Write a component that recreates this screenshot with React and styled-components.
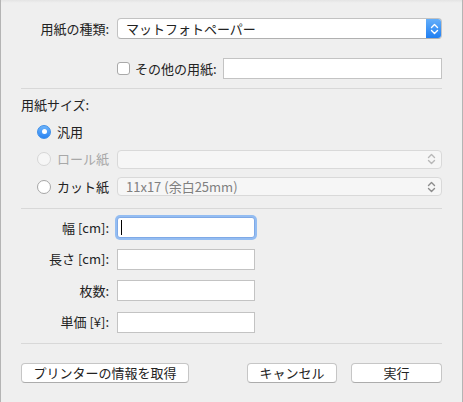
import React from 'react'
import styled, { createGlobalStyle } from 'styled-components'

const GlobalStyle = createGlobalStyle`
  html, body {
    margin: 0;
    padding: 0;
    background: #efefef;
  }
  * { box-sizing: border-box; }
`

const Chevrons = ({ color }) => (
  <svg width="9" height="12" viewBox="0 0 9 12">
    <path d="M1.5 4.5 L4.5 1.5 L7.5 4.5" fill="none" stroke={color} strokeWidth="1.4" strokeLinecap="round" strokeLinejoin="round" />
    <path d="M1.5 7.5 L4.5 10.5 L7.5 7.5" fill="none" stroke={color} strokeWidth="1.4" strokeLinecap="round" strokeLinejoin="round" />
  </svg>
)

export default function App() {
  return (
    <>
      <GlobalStyle />
      <Dialog>
        <TopRow>
          <SideLabel>用紙の種類:</SideLabel>
          <Popup>
            <PopupText>マットフォトペーパー</PopupText>
            <BlueArrow><Chevrons color="#ffffff" /></BlueArrow>
          </Popup>
        </TopRow>

        <OtherRow>
          <CheckBox />
          <Text>その他の用紙:</Text>
          <Field $grow />
        </OtherRow>

        <Separator $top={9} />

        <Heading>用紙サイズ:</Heading>

        <RadioGroup>
          <RadioRow>
            <Radio $checked />
            <Text>汎用</Text>
          </RadioRow>
          <RadioRow>
            <Radio $disabled />
            <RadioLabel $disabled>ロール紙</RadioLabel>
            <GrayPopup>
              <PopupText />
              <Chevrons color="#b8b8b8" />
            </GrayPopup>
          </RadioRow>
          <RadioRow>
            <Radio />
            <RadioLabel>カット紙</RadioLabel>
            <GrayPopup>
              <PopupText $gray>11x17 (余白25mm)</PopupText>
              <Chevrons color="#8c8c8c" />
            </GrayPopup>
          </RadioRow>
        </RadioGroup>

        <Separator $top={11.5} />

        <Fields>
          <FieldRow>
            <SideLabel>幅 [cm]:</SideLabel>
            <Field $focused><Caret /></Field>
          </FieldRow>
          <FieldRow>
            <SideLabel>長さ [cm]:</SideLabel>
            <Field />
          </FieldRow>
          <FieldRow>
            <SideLabel>枚数:</SideLabel>
            <Field />
          </FieldRow>
          <FieldRow>
            <SideLabel>単価 [¥]:</SideLabel>
            <Field />
          </FieldRow>
        </Fields>

        <Separator $top={10} />

        <ButtonBar>
          <Button $w={168}>プリンターの情報を取得</Button>
          <Spacer />
          <Button $w={90}>キャンセル</Button>
          <Button $w={91}>実行</Button>
        </ButtonBar>
      </Dialog>
    </>
  )
}

const Dialog = styled.div`
  width: 463px;
  height: 402px;
  padding: 18px 20px 0 20px;
  border-left: 1px solid #b4b4b4;
  border-right: 1px solid #b4b4b4;
  background: linear-gradient(#e4e4e4 0px, #efefef 3px, #efefef 100%);
  font-family: "Noto Sans CJK JP", "Liberation Sans", sans-serif;
  font-size: 13px;
  color: #222222;
  display: flex;
  flex-direction: column;
  overflow: hidden;
`

const TopRow = styled.div`
  display: flex;
  align-items: center;
  height: 21px;
  gap: 8px;
`

const SideLabel = styled.div`
  width: 88px;
  text-align: right;
  white-space: nowrap;
  line-height: 16px;
  flex-shrink: 0;
`

const Popup = styled.div`
  flex: 1;
  height: 21px;
  display: flex;
  align-items: center;
  background: #ffffff;
  border: 1px solid #c2c2c2;
  border-bottom-color: #b0b0b0;
  border-radius: 4px;
  overflow: hidden;
`

const PopupText = styled.div`
  flex: 1;
  padding-left: 8px;
  line-height: 16px;
  white-space: nowrap;
  color: ${(p) => (p.$gray ? '#808080' : '#222222')};
`

const BlueArrow = styled.div`
  width: 16px;
  align-self: stretch;
  margin: -1px -1px -1px 0;
  display: flex;
  align-items: center;
  justify-content: center;
  background: linear-gradient(#67b1fa, #1c7cf2);
  border-radius: 0 4px 4px 0;
`

const GrayPopup = styled.div`
  flex: 1;
  height: 19px;
  display: flex;
  align-items: center;
  padding-right: 5px;
  background: #f6f6f6;
  border: 1px solid #d9d9d9;
  border-radius: 4px;
`

const OtherRow = styled.div`
  display: flex;
  align-items: center;
  height: 21px;
  margin-top: 19px;
  padding-left: 96px;
`

const CheckBox = styled.div`
  width: 13px;
  height: 13px;
  border: 1px solid #a9a9a9;
  border-radius: 3px;
  background: #ffffff;
  margin-right: 5px;
`

const Text = styled.span`
  line-height: 16px;
  white-space: nowrap;
  margin-right: 6px;
`

const Field = styled.div`
  position: relative;
  height: 21px;
  width: ${(p) => (p.$grow ? 'auto' : '138px')};
  flex: ${(p) => (p.$grow ? 1 : 'none')};
  background: #ffffff;
  border: 1px solid ${(p) => (p.$focused ? '#7fa9e6' : '#c3c3c3')};
  box-shadow: ${(p) => (p.$focused ? '0 0 0 2px #94bdf2' : 'none')};
  border-radius: ${(p) => (p.$focused ? '3px' : '0')};
`

const Caret = styled.div`
  position: absolute;
  left: 3px;
  top: 2px;
  width: 1px;
  height: 15px;
  background: #000000;
`

const Separator = styled.div`
  height: 1px;
  background: #d8d8d8;
  margin-top: ${(p) => p.$top}px;
  flex-shrink: 0;
`

const Heading = styled.div`
  margin-top: 8px;
  line-height: 16px;
`

const RadioGroup = styled.div`
  display: flex;
  flex-direction: column;
  gap: 8.5px;
  margin-top: 9px;
  padding-left: 16px;
`

const RadioRow = styled.div`
  display: flex;
  align-items: center;
  height: 19px;
`

const Radio = styled.div`
  width: 14px;
  height: 14px;
  border-radius: 50%;
  margin-right: 6px;
  flex-shrink: 0;
  position: relative;
  background: ${(p) =>
    p.$checked ? 'linear-gradient(#6cb3fa, #2a84f3)' : p.$disabled ? '#f6f6f6' : '#ffffff'};
  border: 1px solid
    ${(p) => (p.$checked ? '#3d8ee8' : p.$disabled ? '#d6d6d6' : '#a6a6a6')};

  &::after {
    content: '';
    display: ${(p) => (p.$checked ? 'block' : 'none')};
    position: absolute;
    left: 50%;
    top: 50%;
    width: 5px;
    height: 5px;
    margin: -2.5px 0 0 -2.5px;
    border-radius: 50%;
    background: #ffffff;
  }
`

const RadioLabel = styled.span`
  width: 60px;
  flex-shrink: 0;
  line-height: 16px;
  white-space: nowrap;
  color: ${(p) => (p.$disabled ? '#a8a8a8' : '#222222')};
`

const Fields = styled.div`
  display: flex;
  flex-direction: column;
  gap: 10.5px;
  margin-top: 8.5px;
`

const FieldRow = styled.div`
  display: flex;
  align-items: center;
  gap: 8px;
`

const ButtonBar = styled.div`
  display: flex;
  align-items: center;
  gap: 14px;
  margin-top: 19px;
`

const Spacer = styled.div`
  flex: 1;
`

const Button = styled.button`
  width: ${(p) => p.$w}px;
  height: 20px;
  padding: 0;
  background: #ffffff;
  border: 1px solid #c6c6c6;
  border-bottom-color: #acacac;
  border-radius: 4px;
  font-family: "Noto Sans CJK JP", "Liberation Sans", sans-serif;
  font-size: 13px;
  line-height: 16px;
  color: #222222;
`
